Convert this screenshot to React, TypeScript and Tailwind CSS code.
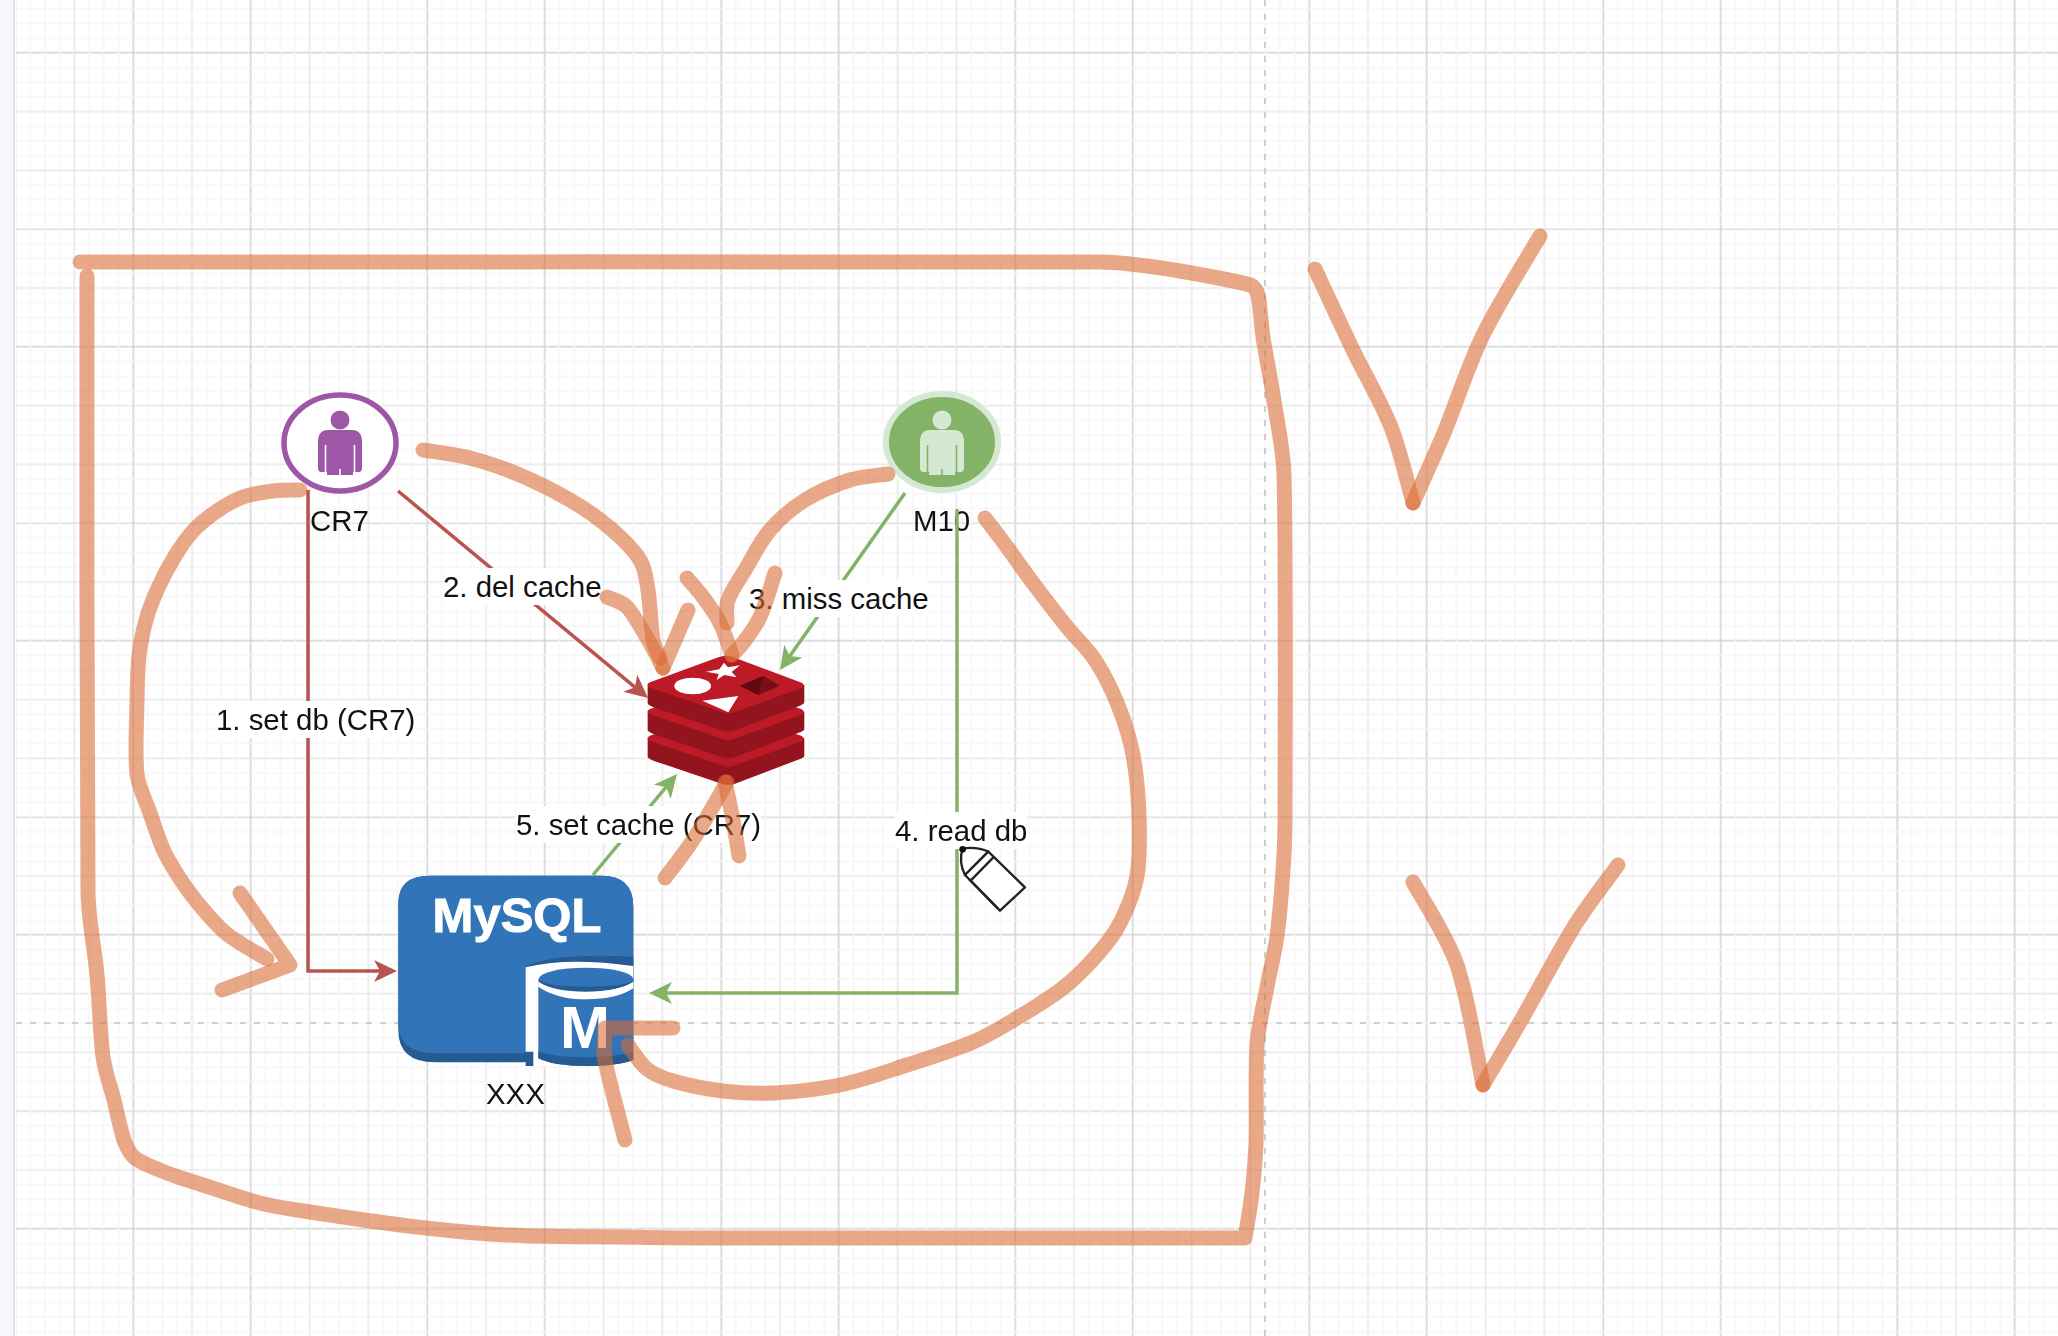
import React from 'react';

type Pt = [number, number];

const RED = '#b85450';
const GREEN = '#82b366';
const BLUE = '#3274b8';
const BLUE_DARK = '#255b92';

// hand drawn strokes, in page px. a repeated point gives a sharp corner
const inkCurves: Pt[][] = [
  // big box
  [[80, 262], [1100, 262], [1130, 264], [1180, 271], [1250, 285], [1258, 295], [1263, 337], [1273, 395], [1284, 475], [1285, 820], [1283, 871], [1277, 936], [1267, 987], [1257, 1045], [1256, 1142], [1252, 1193], [1245, 1238], [1245, 1238], [700, 1238], [620, 1237], [506, 1235], [417, 1227], [310, 1212], [260, 1203], [203, 1185], [167, 1173], [135, 1158], [124, 1140], [114, 1100], [103, 1057], [97, 975], [88, 892], [87, 276]],
  // CR7 -> MySQL
  [[300, 490], [273, 491], [243, 497], [217, 511], [193, 531], [175, 556], [158, 588], [146, 620], [139, 656], [137, 702], [137, 774], [150, 813], [163, 849], [177, 874], [197, 902], [227, 934], [267, 959]],
  [[240, 893], [290, 965], [290, 965], [222, 990]],
  // CR7 -> redis
  [[423, 450], [470, 458], [520, 475], [570, 500], [610, 528], [640, 560], [648, 590], [653, 640], [660, 658]],
  [[607, 597], [627, 607], [650, 643], [663, 668]],
  [[663, 668], [688, 610]],
  // M10 -> redis
  [[888, 474], [850, 480], [805, 500], [770, 530], [745, 570], [728, 600], [727, 623]],
  [[687, 578], [703, 597], [720, 623], [732, 655]],
  [[732, 655], [743, 643], [760, 617], [775, 573]],
  // redis -> MySQL
  [[665, 878], [693, 840], [727, 782]],
  [[739, 856], [733, 820], [725, 782]],
  // M10 -> MySQL
  [[985, 518], [1007, 547], [1033, 583], [1067, 627], [1095, 660], [1118, 705], [1133, 755], [1139, 816], [1137, 876], [1120, 923], [1097, 955], [1063, 988], [1017, 1018], [973, 1042], [907, 1065], [840, 1085], [773, 1093], [723, 1091], [673, 1081], [647, 1069], [628, 1045]],
  [[673, 1028], [605, 1028], [605, 1028], [605, 1060], [625, 1140]],
  // ticks
  [[1315, 269], [1352, 348], [1391, 427], [1413, 503]],
  [[1413, 503], [1444, 433], [1483, 335], [1540, 236]],
  [[1413, 882], [1457, 965], [1483, 1085]],
  [[1483, 1085], [1523, 1017], [1575, 925], [1618, 865]],
];

const smooth = (p: Pt[]) => {
  let d = `M${p[0][0]} ${p[0][1]}`;
  for (let i = 0; i < p.length - 1; i++) {
    const a = p[Math.max(i - 1, 0)];
    const b = p[i];
    const c = p[i + 1];
    const e = p[Math.min(i + 2, p.length - 1)];
    const seg = Math.hypot(c[0] - b[0], c[1] - b[1]);
    const k1 = Math.min(1 / 6, seg / 3 / (Math.hypot(c[0] - a[0], c[1] - a[1]) || 1));
    const k2 = Math.min(1 / 6, seg / 3 / (Math.hypot(e[0] - b[0], e[1] - b[1]) || 1));
    d += ` C${b[0] + (c[0] - a[0]) * k1} ${b[1] + (c[1] - a[1]) * k1} ${c[0] - (e[0] - b[0]) * k2} ${c[1] - (e[1] - b[1]) * k2} ${c[0]} ${c[1]}`;
  }
  return d;
};

const straight = (p: Pt[]) => 'M' + p.map((q) => q.join(' ')).join(' L');

const Edge = ({ points, color }: { points: Pt[]; color: string }) => {
  const tip = points[points.length - 1];
  const prev = points[points.length - 2];
  const len = Math.hypot(tip[0] - prev[0], tip[1] - prev[1]);
  const ux = (tip[0] - prev[0]) / len;
  const uy = (tip[1] - prev[1]) / len;
  const at = (back: number, side: number) => `${tip[0] - ux * back - uy * side} ${tip[1] - uy * back + ux * side}`;
  const line = [...points.slice(0, -1), [tip[0] - ux * 10, tip[1] - uy * 10] as Pt];
  return (
    <g>
      <path d={straight(line)} fill="none" stroke={color} strokeWidth={3.5} />
      <path d={`M${at(0, 0)} L${at(23, 11)} L${at(17, 0)} L${at(23, -11)} Z`} fill={color} />
    </g>
  );
};

const Person = ({ x, y, color, bg }: { x: number; y: number; color: string; bg: string }) => (
  <g transform={`translate(${x} ${y})`}>
    <circle cx={0} cy={0} r={9.5} fill={color} />
    <path
      d="M-12 10 H12 Q22 10 22 22 V48 Q22 52 18.5 52 L13 52 V55 H-13 V52 L-18.5 52 Q-22 52 -22 48 V22 Q-22 10 -12 10 Z"
      fill={color}
    />
    <path d="M-14.5 25 V55 M14.5 25 V55 M0 49 V55" stroke={bg} strokeWidth={1.6} fill="none" />
  </g>
);

const RedisLayer = ({ dy }: { dy: number }) => (
  <g transform={`translate(0 ${dy})`}>
    <path d="M143 435 V490 Q143 495 160 502 L365 571 Q385 578 405 571 L600 497 Q613 492 613 487 V435 Z" fill="#93131e" />
    <path d="M150 427 L355 352 Q378 342 400 352 L605 428 Q618 436 605 444 L405 516 Q385 524 365 516 L150 443 Q135 435 150 427 Z" fill="#bb1a26" />
  </g>
);

const RedisLogo = () => (
  <g transform="translate(600 540) scale(0.3333)">
    <RedisLayer dy={160} />
    <RedisLayer dy={80} />
    <RedisLayer dy={0} />
    <path d="M372 368 L384 382 L420 376 L395 396 L410 412 L373 405 L350 420 L356 402 L318 395 L358 388 Z" fill="#fff" />
    <ellipse cx={278} cy={438} rx={55} ry={25} fill="#fff" />
    <path d="M307 482 L415 468 L385 517 Z" fill="#fff" />
    <path d="M420 437 L490 408 L540 437 L475 465 Z" fill="#7a0d15" />
    <path d="M420 437 L490 408 L475 465 Z" fill="#5f0a10" />
  </g>
);

const MysqlLogo = () => (
  <g transform="translate(380 840) scale(0.3333)">
    <path d="M55 190 Q55 107 150 107 H665 Q760 107 760 200 V640 H460 V667 H165 Q55 667 55 570 Z" fill={BLUE_DARK} />
    <path d="M55 190 Q55 107 150 107 H665 Q760 107 760 200 V600 H460 V640 H165 Q55 640 55 550 Z" fill={BLUE} />
    <path d="M437 640 V380 Q520 338 760 350 V678 H437 Z" fill={BLUE_DARK} />
    <path d="M437 635 V382 Q560 350 760 378 V678 H460 V635 Z" fill="#fff" />
    <path d="M475 420 V655 Q520 678 620 678 Q710 678 760 660 V420 Z" fill={BLUE} />
    <path d="M475 635 V655 Q520 678 620 678 Q710 678 760 660 V635 Q700 652 620 652 Q530 652 475 635 Z" fill={BLUE_DARK} />
    <path d="M475 440 Q530 478 620 478 Q710 478 760 445 V420 H475 Z" fill="#fff" />
    <ellipse cx={618} cy={418} rx={142} ry={35} fill={BLUE} />
    <path d="M476 425 Q520 455 618 455 Q710 455 760 425 V418 Q750 440 618 440 Q490 440 476 418 Z" fill={BLUE_DARK} />
  </g>
);

const Marker = () => (
  <g transform="translate(880 780) scale(0.3333)" stroke="#222" strokeWidth={7} strokeLinejoin="round" fill="#fff">
    <path d="M255 285 Q235 245 248 205 Q295 200 325 215 Z" />
    <path d="M325 215 L435 322 L360 392 L255 285 Z" />
    <path d="M272 302 L340 232 M268 298 L352 384" fill="none" />
    <circle cx={248} cy={208} r={10} fill="#111" stroke="none" />
  </g>
);

const gridLines = Array.from({ length: 20 }, (_, i) => i);

const lineColor = (i: number, horizontal: boolean) => {
  if (i === 0) return horizontal ? '#dadadc' : '#cfcfd2';
  if (i === 8) return '#cfcfd2';
  if (i % 4 === 0) return '#e6e6e8';
  return '#f5f5f5';
};

const Label = ({ className, children }: { className: string; children: React.ReactNode }) => (
  <div className={`absolute h-[37px] bg-white text-[29.4px] leading-[37px] whitespace-nowrap text-[#111] ${className}`}>
    {children}
  </div>
);

const NodeName = ({ className, children }: { className: string; children: React.ReactNode }) => (
  <div className={`absolute text-[29.4px] leading-[37px] whitespace-nowrap text-[#111] ${className}`}>{children}</div>
);

export default function App() {
  return (
    <div className="flex h-[1336px] w-[2058px] overflow-hidden bg-white font-['Liberation_Sans',Arial,sans-serif]">
      <div className="w-[15px] shrink-0 border-r-2 border-[#e0e1e3] bg-[#f5f7fb]" />
      <div className="relative flex-1 overflow-hidden blur-[0.7px]">
        <div className="absolute inset-y-0 -left-[15px] w-[2058px]">
          {/* grid */}
          <svg className="absolute inset-0" width={2058} height={1336}>
            <defs>
              <pattern id="grid" x={132.5} y={228.5} width={294} height={294} patternUnits="userSpaceOnUse">
                {gridLines.map((i) => (
                  <g key={i}>
                    <rect x={i * 14.7} y={0} width={1.4} height={294} fill={lineColor(i, false)} />
                    <rect x={0} y={i * 14.7} width={294} height={1.4} fill={lineColor(i, true)} />
                  </g>
                ))}
              </pattern>
            </defs>
            <rect x={16} y={0} width={2042} height={1336} fill="url(#grid)" />
            <path d="M1265 0 V1336" stroke="#c4c4c4" strokeWidth={1.6} strokeDasharray="6 8" />
            <path d="M16 1023 H2058" stroke="#c4c4c4" strokeWidth={1.6} strokeDasharray="6 8" />
          </svg>

          <NodeName className="left-[310px] top-[502px]">CR7</NodeName>
          <NodeName className="left-[913px] top-[502px]">M10</NodeName>
          <NodeName className="left-[486px] top-[1075px]">XXX</NodeName>

          {/* nodes and edges */}
          <svg className="absolute inset-0" width={2058} height={1336}>
            <Edge points={[[308, 490], [308, 971], [397, 971]]} color={RED} />
            <Edge points={[[398, 491], [648, 698]]} color={RED} />
            <Edge points={[[905, 493], [780, 670]]} color={GREEN} />
            <Edge points={[[957, 509], [957, 993], [649, 993]]} color={GREEN} />
            <Edge points={[[593, 875], [677, 774]]} color={GREEN} />

            <ellipse cx={340} cy={443} rx={56} ry={48} fill="#fff" stroke="#9d57a6" strokeWidth={5.5} />
            <Person x={340} y={420} color="#9d57a6" bg="#fff" />
            <ellipse cx={942} cy={442} rx={56} ry={48} fill={GREEN} stroke="#d5e8d4" strokeWidth={6} />
            <Person x={942} y={420} color="#d5e8d4" bg={GREEN} />

            <RedisLogo />
            <MysqlLogo />
            <text x={517} y={932} textAnchor="middle" fill="#fff" stroke="#fff" strokeWidth={1} fontSize={49} fontWeight={700}>
              MySQL
            </text>
            <text x={585} y={1048} textAnchor="middle" fill="#fff" fontSize={60} fontWeight={700}>
              M
            </text>
          </svg>

          <Label className="left-[216px] top-[701px]">1. set db (CR7)</Label>
          <Label className="left-[443px] top-[568px]">2. del cache</Label>
          <Label className="left-[749px] top-[580px]">3. miss cache</Label>
          <Label className="left-[895px] top-[812px]">4. read db</Label>
          <Label className="left-[516px] top-[806px]">5. set cache (CR7)</Label>

          {/* marker cursor and pen strokes */}
          <svg className="absolute inset-0" width={2058} height={1336}>
            <Marker />
            {inkCurves.map((p, i) => (
              <path key={i} d={smooth(p)} fill="none" stroke="#d96a34" strokeOpacity={0.58} strokeWidth={15} strokeLinecap="round" strokeLinejoin="round" />
            ))}
          </svg>
        </div>
      </div>
    </div>
  );
}
